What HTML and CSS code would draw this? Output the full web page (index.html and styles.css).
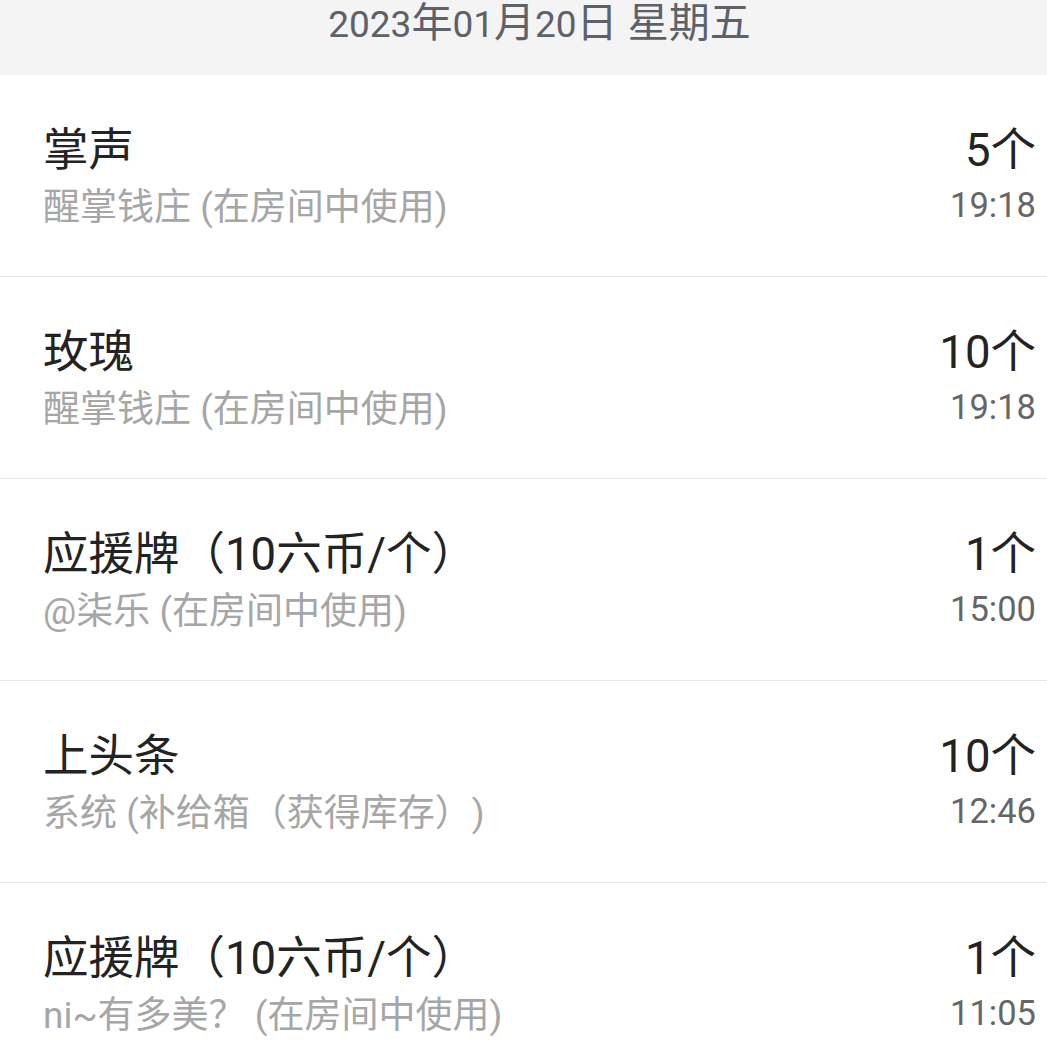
FILE: index.html
```html
<!DOCTYPE html>
<html lang="zh-CN">
<head>
<meta charset="utf-8">
<title>使用记录</title>
<link rel="stylesheet" href="styles.css">
</head>
<body>
<div class="page">
  <div class="date-header"><span class="dg">2023</span>年<span class="dg">01</span>月<span class="dg">20</span>日 星期五</div>
  <ul class="list">
    <li class="item">
      <div class="line main"><span class="name">掌声</span><span class="amount">5个</span></div>
      <div class="line sub"><span class="source">醒掌钱庄 (在房间中使用)</span><span class="time">19:18</span></div>
    </li>
    <li class="item">
      <div class="line main"><span class="name">玫瑰</span><span class="amount">10个</span></div>
      <div class="line sub"><span class="source">醒掌钱庄 (在房间中使用)</span><span class="time">19:18</span></div>
    </li>
    <li class="item">
      <div class="line main"><span class="name">应援牌（10六币/个）</span><span class="amount">1个</span></div>
      <div class="line sub"><span class="source">@柒乐 (在房间中使用)</span><span class="time">15:00</span></div>
    </li>
    <li class="item">
      <div class="line main"><span class="name">上头条</span><span class="amount">10个</span></div>
      <div class="line sub"><span class="source">系统 (补给箱（获得库存）)</span><span class="time">12:46</span></div>
    </li>
    <li class="item">
      <div class="line main"><span class="name">应援牌（10六币/个）</span><span class="amount">1个</span></div>
      <div class="line sub"><span class="source">ni~有多美？ (在房间中使用)</span><span class="time">11:05</span></div>
    </li>
  </ul>
</div>
</body>
</html>
```
FILE: styles.css
```css
html, body {
  margin: 0;
  padding: 0;
  background: #ffffff;
}

body {
  font-family: Roboto, "Noto Sans CJK SC", "Noto Sans", sans-serif;
  color: #232323;
  text-spacing-trim: space-all;
}

.page {
  width: 1047px;
}

.date-header {
  box-sizing: border-box;
  height: 75px;
  padding: 1px 0 0 32px;
  background: #f4f4f4;
  color: #5d6168;
  font-size: 41px;
  line-height: 44px;
  text-align: center;
}

.date-header .dg {
  font-size: 37px;
}

.list {
  list-style: none;
  margin: 0;
  padding: 0;
}

.item {
  padding: 48px 11px 44px 43px;
  border-bottom: 1px solid #e6e6e6;
}

.line {
  display: flex;
  justify-content: space-between;
  white-space: nowrap;
}

.main {
  align-items: baseline;
  height: 56px;
  font-size: 45.5px;
  line-height: 56px;
  color: #232323;
}

.sub {
  align-items: flex-start;
  height: 48px;
  margin-top: 5px;
}

.source {
  font-size: 37px;
  line-height: 48px;
  color: #a6a6a6;
}

.time {
  font-size: 34.5px;
  line-height: 43px;
  color: #666666;
}
```
